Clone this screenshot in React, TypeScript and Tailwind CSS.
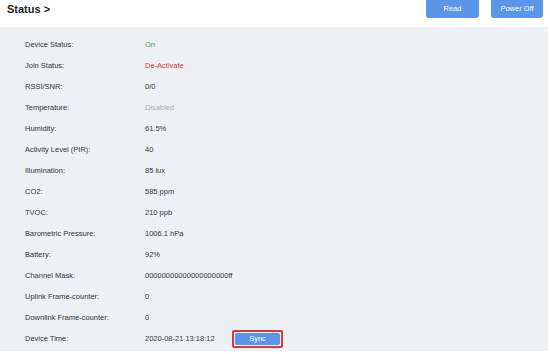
import React from "react";

type Row = { label: string; value: string; color?: string };

const rows: Row[] = [
  { label: "Device Status:", value: "On", color: "text-[#3d9a5c]" },
  { label: "Join Status:", value: "De-Activate", color: "text-[#d9363e]" },
  { label: "RSSI/SNR:", value: "0/0" },
  { label: "Temperature:", value: "Disabled", color: "text-[#a9adb2]" },
  { label: "Humidity:", value: "61.5%" },
  { label: "Activity Level (PIR):", value: "40" },
  { label: "Illumination:", value: "85 lux" },
  { label: "CO2:", value: "585 ppm" },
  { label: "TVOC:", value: "210 ppb" },
  { label: "Barometric Pressure:", value: "1006.1 hPa" },
  { label: "Battery:", value: "92%" },
  { label: "Channel Mask:", value: "00000000000000000000ff" },
  { label: "Uplink Frame-counter:", value: "0" },
  { label: "Downlink Frame-counter:", value: "0" },
];

export default function App() {
  return (
    <div
      className="w-[550px] h-[354px] bg-white overflow-hidden text-[#333]"
      style={{ fontFamily: '"Liberation Sans", Arial, sans-serif' }}
    >
      <div className="h-[27px] flex items-start justify-between pl-[7px] pr-[7px]">
        <div className="mt-[2px] text-[11px] font-bold text-[#222] leading-[14px]">Status &gt;</div>
        <div className="flex gap-[12px]">
          <button className="w-[53px] h-[18px] rounded-b-[3px] bg-[#5b95e7] text-white text-[7.5px] flex items-center justify-center">
            Read
          </button>
          <button className="w-[52px] h-[18px] rounded-b-[3px] bg-[#5b95e7] text-white text-[7.5px] flex items-center justify-center">
            Power Off
          </button>
        </div>
      </div>
      <div className="w-[548px] h-[324px] bg-[#eef1f4] pt-[7px] pl-[25px] text-[7.5px]">
        {rows.map((r) => (
          <div key={r.label} className="h-[21px] flex items-center">
            <div className="w-[120px]">{r.label}</div>
            <div className={r.color ?? ""}>{r.value}</div>
          </div>
        ))}
        <div className="h-[21px] flex items-center">
          <div className="w-[120px]">Device Time:</div>
          <div className="w-[87px]">2020-08-21 13:18:12</div>
          <div className="w-[51px] h-[18px] border-[2px] border-[#d9363e] rounded-[2px] p-[1px] flex">
            <div className="flex-1 bg-[#5b95e7] rounded-[2px] text-white text-[7.5px] flex items-center justify-center">
              Sync
            </div>
          </div>
        </div>
      </div>
    </div>
  );
}
